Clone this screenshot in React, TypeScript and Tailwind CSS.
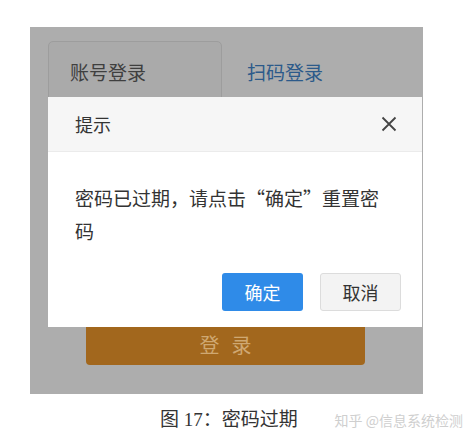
import React from 'react';

const cjk = { fontFamily: '"Noto Sans CJK SC", "Noto Sans", sans-serif' };

function LoginPanel() {
  return (
    <div className="relative ml-[30px] mt-[27px] w-[393px] h-[367px] bg-[#adadad] flex flex-col">
      {/* Tabs */}
      <div className="flex items-start pl-[18px] pt-[14px]">
        <div className="w-[174px] h-[80px] rounded-t-[5px] border border-[#9d9d9d] bg-[#aaaaaa] pl-[21px] pt-[14px] text-[19px] leading-[32px] text-[#3f3f3f]">
          账号登录
        </div>
        <div className="pl-[25px] pt-[15px] text-[19px] leading-[32px] text-[#2c5a8a]">
          扫码登录
        </div>
      </div>

      {/* Login button */}
      <div className="mt-auto mb-[29px] ml-[56px] w-[279px] h-[44px] rounded-[4px] bg-[#a2671d] flex items-center justify-center pt-[4px] pl-[12px] text-[20px] tracking-[12px] text-[#cfa872]">
        登录
      </div>

      {/* Dialog */}
      <div className="absolute left-[18px] top-[70px] w-[374px] h-[230px] bg-white flex flex-col">
        <div className="h-[55px] bg-[#f6f6f6] border-b border-[#ebebeb] flex items-center justify-between pl-[27px] pr-[25px]">
          <span className="text-[18px] text-[#333]">提示</span>
          <svg width="16" height="16" viewBox="0 0 16 16" fill="none" stroke="#444" strokeWidth="1.8">
            <path d="M1.5 1.5 L14.5 14.5 M14.5 1.5 L1.5 14.5" />
          </svg>
        </div>
        <div className="px-[27px] pt-[29px] text-[19px] leading-[33px] text-[#333]">
          密码已过期，请点击“确定”重置密码
        </div>
        <div className="mt-auto mb-[16px] mr-[21px] flex justify-end gap-[17px]">
          <button className="w-[81px] h-[38px] rounded-[3px] bg-[#2f8be8] text-white text-[18px]">确定</button>
          <button className="w-[81px] h-[38px] rounded-[3px] bg-[#f3f3f3] border border-[#dcdcdc] text-[#333] text-[18px]">取消</button>
        </div>
      </div>
    </div>
  );
}

export default function App() {
  return (
    <div className="w-[475px] h-[443px] bg-white overflow-hidden" style={cjk}>
      <LoginPanel />
      <div className="flex items-center mt-[12px]">
        <span
          className="ml-[160px] text-[19px] text-[#333]"
          style={{ fontFamily: '"Liberation Serif", "Noto Sans CJK SC", serif' }}
        >
          图 17：密码过期
        </span>
        <span className="ml-auto mr-[12px] text-[14px] text-[#cfcfcf]">知乎 @信息系统检测</span>
      </div>
    </div>
  );
}
